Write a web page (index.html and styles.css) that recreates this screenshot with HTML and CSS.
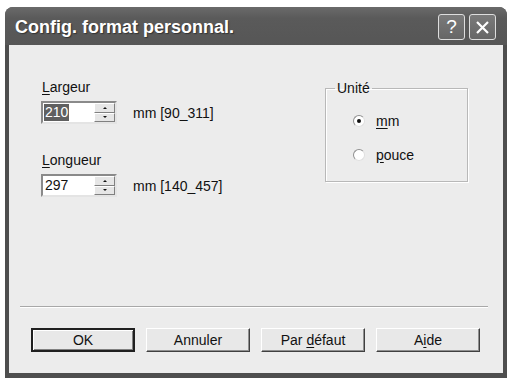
FILE: index.html
```html
<!DOCTYPE html>
<html lang="fr">
<head>
    <meta charset="UTF-8">
    <title>Config. format personnal.</title>
    <link rel="stylesheet" href="styles.css">
</head>
<body>
    <div class="window">
        <div class="titlebar">
            <span class="title">Config. format personnal.</span>
            <div class="caption-buttons">
                <span class="cap-btn">?</span>
                <span class="cap-btn">
                    <svg width="15" height="15" viewBox="0 0 15 15">
                        <path d="M2 2 L13 13 M13 2 L2 13" stroke="#fff" stroke-width="2.2" fill="none"/>
                    </svg>
                </span>
            </div>
        </div>
        <div class="client">
            <div class="fields">
                <div class="column">
                    <div class="field">
                        <div class="label"><u>L</u>argeur</div>
                        <div class="field-row">
                            <div class="spin-box">
                                <span class="value selected">210</span>
                                <div class="spinner">
                                    <span class="spin up"></span>
                                    <span class="spin down"></span>
                                </div>
                            </div>
                            <span class="range">mm [90_311]</span>
                        </div>
                    </div>
                    <div class="field">
                        <div class="label"><u>L</u>ongueur</div>
                        <div class="field-row">
                            <div class="spin-box">
                                <span class="value">297</span>
                                <div class="spinner">
                                    <span class="spin up"></span>
                                    <span class="spin down"></span>
                                </div>
                            </div>
                            <span class="range">mm [140_457]</span>
                        </div>
                    </div>
                </div>
                <fieldset class="group">
                    <legend>Unité</legend>
                    <div class="radio-row">
                        <span class="radio checked"></span>
                        <span><u>m</u>m</span>
                    </div>
                    <div class="radio-row">
                        <span class="radio"></span>
                        <span><u>p</u>ouce</span>
                    </div>
                </fieldset>
            </div>
            <div class="separator"></div>
            <div class="buttons">
                <span class="btn default"><span>OK</span></span>
                <span class="btn"><span>Annuler</span></span>
                <span class="btn"><span>Par <u>d</u>éfaut</span></span>
                <span class="btn"><span>A<u>i</u>de</span></span>
            </div>
        </div>
    </div>
</body>
</html>
```

FILE: styles.css
```css
* {
    margin: 0;
    padding: 0;
    box-sizing: border-box;
}
body {
    background-color: #fff;
    font-family: "Liberation Sans", Arial, sans-serif;
    font-size: 14px;
    color: #111;
}
u {
    text-decoration: underline;
    text-underline-offset: 2px;
}
.window {
    width: 502px;
    height: 371px;
    margin: 7px 0 0 5px;
    background-color: #4e4e4e;
    border-radius: 8px 8px 0 0;
    display: flex;
    flex-direction: column;
}
/* 标题栏 */
.titlebar {
    height: 38px;
    display: flex;
    align-items: center;
    justify-content: space-between;
    padding: 0 11px 0 10px;
    border-radius: 8px 8px 0 0;
    background: linear-gradient(#6a6a6a, #5a5a5a 30%, #565656);
}
.title {
    font-size: 18px;
    font-weight: bold;
    color: #fff;
    text-shadow: 1px 1px 1px #333;
    padding-top: 3px;
}
.caption-buttons {
    display: flex;
    gap: 4px;
    padding-top: 2px;
}
.cap-btn {
    width: 27px;
    height: 26px;
    border: 1px solid #ddd;
    border-radius: 3px;
    background: linear-gradient(#7a7a7a, #666);
    color: #fff;
    font-size: 19px;
    display: flex;
    align-items: center;
    justify-content: center;
}
/* 客户区 */
.client {
    flex: 1;
    margin: 0 4px 5px 4px;
    background-color: #ececec;
    display: flex;
    flex-direction: column;
}
.fields {
    height: 261px;
    display: flex;
    align-items: flex-start;
    padding: 34px 0 0 32px;
}
.column {
    width: 284px;
}
.label {
    line-height: 16px;
    padding-left: 1px;
    margin-bottom: 6px;
}
.field + .field {
    margin-top: 28px;
}
.field-row {
    display: flex;
    align-items: center;
    gap: 16px;
}
.spin-box {
    width: 76px;
    height: 23px;
    background-color: #fff;
    border: 2px solid;
    border-color: #8a8a8a #e4e4e4 #e4e4e4 #8a8a8a;
    display: flex;
    align-items: center;
    justify-content: space-between;
    padding-left: 1px;
}
.value {
    line-height: 17px;
    padding: 0 1px;
}
.value.selected {
    background-color: #606060;
    color: #fff;
}
.spinner {
    width: 21px;
    height: 19px;
    display: flex;
    flex-direction: column;
}
.spin {
    flex: 1;
    background-color: #e6e6e6;
    border: 1px solid;
    border-color: #fff #808080 #808080 #fff;
    display: flex;
    align-items: center;
    justify-content: center;
}
.spin::after {
    content: "";
    border-left: 2px solid transparent;
    border-right: 2px solid transparent;
}
.up::after {
    border-bottom: 2px solid #111;
}
.down::after {
    border-top: 2px solid #111;
}
.range {
    line-height: 16px;
}
/* 单位分组框 */
.group {
    width: 143px;
    height: 102px;
    margin-top: 1px;
    border: 1px solid #b8b8b8;
    box-shadow: 1px 1px 0 #fff, inset 1px 1px 0 #fff;
    padding: 0;
}
.group legend {
    margin-left: 9px;
    padding: 0 2px;
    line-height: 16px;
}
.radio-row {
    display: flex;
    align-items: center;
    gap: 11px;
    height: 16px;
    padding-left: 27px;
    margin-top: 17px;
}
.radio-row + .radio-row {
    margin-top: 18px;
}
.radio {
    width: 12px;
    height: 12px;
    border-radius: 50%;
    background-color: #fff;
    border: 1px solid;
    border-color: #909090 #e0e0e0 #e0e0e0 #909090;
    display: flex;
    align-items: center;
    justify-content: center;
}
.radio.checked::after {
    content: "";
    width: 4px;
    height: 4px;
    border-radius: 50%;
    background-color: #111;
}
/* 分隔线 */
.separator {
    height: 2px;
    margin: 0 15px 0 11px;
    border-top: 1px solid #a8a8a8;
    border-bottom: 1px solid #fff;
}
/* 按钮 */
.buttons {
    display: flex;
    gap: 11px;
    padding: 20px 0 0 22px;
}
.btn {
    width: 104px;
    height: 24px;
    background-color: #e8e8e8;
    border: 1px solid;
    border-color: #fff #404040 #404040 #fff;
    box-shadow: inset -1px -1px 0 #909090;
    display: flex;
    align-items: center;
    justify-content: center;
}
.btn.default {
    border: 2px solid #202020;
    box-shadow: inset 1px 1px 0 #fff, inset -1px -1px 0 #808080;
}
```
